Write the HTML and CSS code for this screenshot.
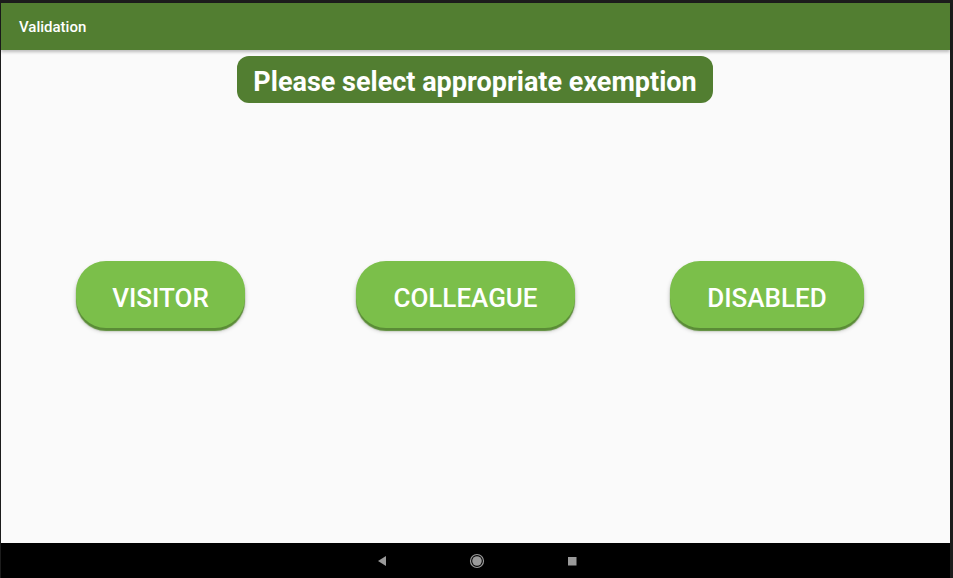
FILE: index.html
```html
<!DOCTYPE html>
<html lang="en">
<head>
	<meta charset="UTF-8">
	<title>Validation</title>
	<link rel="stylesheet" href="styles.css">
</head>
<body>
<div id="device">
	<div id="app_bar">Validation</div>
	<div id="content">
		<div class="title-pill">Please select appropriate exemption</div>
		<div id="options">
			<button class="option visitor">VISITOR</button>
			<button class="option colleague">COLLEAGUE</button>
			<button class="option disabled">DISABLED</button>
		</div>
	</div>
	<div id="nav_bar">
		<svg class="nav-icon" width="14" height="14" viewBox="0 0 14 14">
			<polygon points="11,2 11,12 3,7" fill="#9a9a9a"/>
		</svg>
		<svg class="nav-icon" width="16" height="16" viewBox="0 0 16 16">
			<circle cx="8" cy="8" r="6.5" fill="none" stroke="#9a9a9a" stroke-width="1.2"/>
			<circle cx="8" cy="8" r="4.8" fill="#9a9a9a"/>
		</svg>
		<svg class="nav-icon" width="14" height="14" viewBox="0 0 14 14">
			<rect x="3" y="3" width="8.5" height="8.5" fill="#9a9a9a"/>
		</svg>
	</div>
</div>
</body>
</html>
```

FILE: styles.css
```css
* {
	margin: 0;
	padding: 0;
	box-sizing: border-box;
}

body {
	background: #1c1c1c;
	font-family: Roboto, "Liberation Sans", sans-serif;
}

#device {
	width: 953px;
	height: 578px;
	border-top: 3px solid #1c1c1c;
	border-left: 1px solid #1c1c1c;
	border-right: 3px solid #1c1c1c;
	display: flex;
	flex-direction: column;
	background: #fafafa;
}

#app_bar {
	height: 47px;
	background: #527e31;
	color: #ffffff;
	font-size: 15px;
	font-weight: 500;
	line-height: 47px;
	padding-left: 18px;
	padding-top: 1px;
	box-shadow: 0 2px 3px rgba(0, 0, 0, 0.25);
	position: relative;
	z-index: 1;
}

#content {
	flex: 1;
	display: flex;
	flex-direction: column;
	align-items: center;
}

.title-pill {
	margin-top: 6px;
	width: 476px;
	height: 47px;
	line-height: 47px;
	padding-top: 3px;
	margin-left: -1px;
	background: #527e31;
	border-radius: 12px;
	color: #ffffff;
	font-size: 27px;
	font-weight: 700;
	text-align: center;
}

#options {
	width: 100%;
	display: flex;
	margin-top: 158px;
	padding-left: 75px;
}

.option {
	height: 67px;
	padding-top: 6px;
	border: none;
	border-radius: 30px;
	background: #7bbf4a;
	color: #ffffff;
	font-family: Roboto, "Liberation Sans", sans-serif;
	font-size: 26px;
	font-weight: 500;
	box-shadow: 0 3px 1px #5a8c36, 0 3px 4px rgba(0, 0, 0, 0.25);
}

.visitor {
	width: 169px;
}

.colleague {
	width: 219px;
	margin-left: 111px;
}

.disabled {
	width: 194px;
	margin-left: 95px;
}

#nav_bar {
	height: 35px;
	background: #000000;
	display: flex;
	justify-content: center;
	align-items: center;
	gap: 80px;
	padding-left: 2px;
}
```
